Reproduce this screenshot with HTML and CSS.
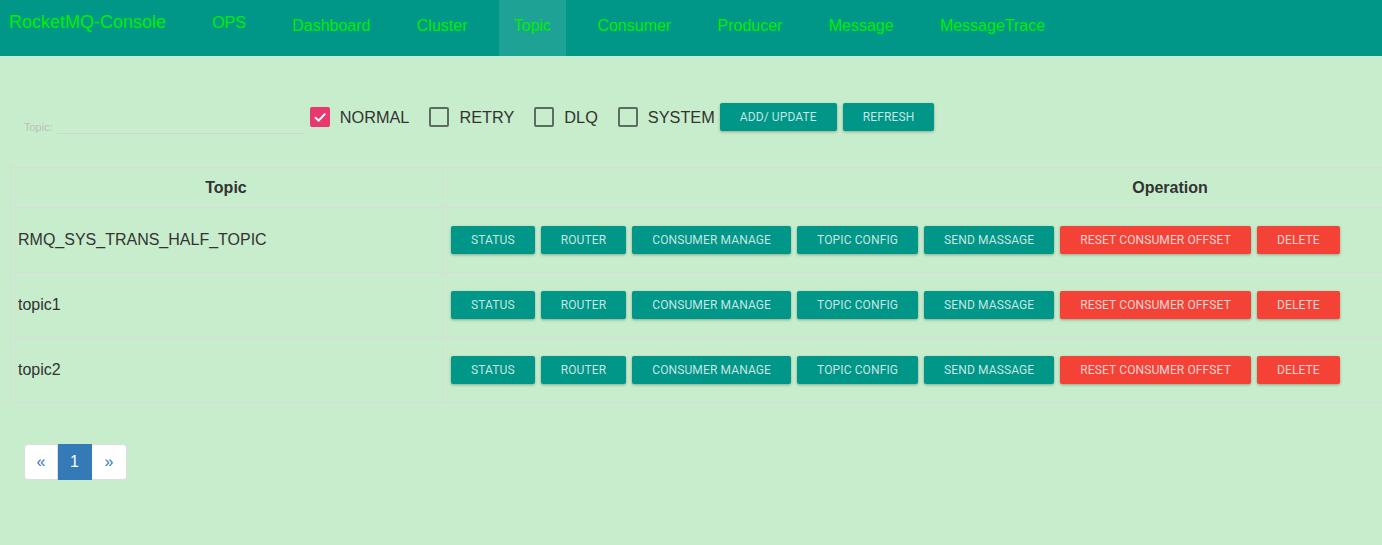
FILE: index.html
```html
<!DOCTYPE html>
<html lang="en">
<head>
<meta charset="utf-8">
<title>RocketMQ-Console</title>
<link rel="stylesheet" href="styles.css">
</head>
<body>
<nav class="navbar">
  <div class="brand">RocketMQ-Console</div>
  <ul class="nav">
    <li class="nav-item ops">OPS</li>
    <li class="nav-item">Dashboard</li>
    <li class="nav-item">Cluster</li>
    <li class="nav-item active">Topic</li>
    <li class="nav-item">Consumer</li>
    <li class="nav-item">Producer</li>
    <li class="nav-item">Message</li>
    <li class="nav-item">MessageTrace</li>
  </ul>
</nav>

<main class="content">
  <div class="filter">
    <div class="topic-field">
      <label class="topic-label">Topic:</label>
      <input class="topic-input" type="text">
    </div>
    <div class="check first">
      <span class="box checked">
        <svg viewBox="0 0 20 20" width="20" height="20"><path d="M5 10.2 L8.6 13.6 L15.2 6.6" fill="none" stroke="#fff" stroke-width="2"/></svg>
      </span>
      <span class="check-label">NORMAL</span>
    </div>
    <div class="check">
      <span class="box"></span>
      <span class="check-label">RETRY</span>
    </div>
    <div class="check">
      <span class="box"></span>
      <span class="check-label">DLQ</span>
    </div>
    <div class="check">
      <span class="box"></span>
      <span class="check-label">SYSTEM</span>
    </div>
    <div class="filter-actions">
      <button class="btn teal">ADD/ UPDATE</button>
      <button class="btn teal">REFRESH</button>
    </div>
  </div>

  <div class="table-wrap">
    <table class="topic-table">
      <thead>
        <tr>
          <th class="col-topic">Topic</th>
          <th>Operation</th>
        </tr>
      </thead>
      <tbody>
        <tr>
          <td class="col-topic">RMQ_SYS_TRANS_HALF_TOPIC</td>
          <td>
            <div class="ops">
              <button class="btn teal">STATUS</button>
              <button class="btn teal">ROUTER</button>
              <button class="btn teal">CONSUMER MANAGE</button>
              <button class="btn teal">TOPIC CONFIG</button>
              <button class="btn teal">SEND MASSAGE</button>
              <button class="btn red">RESET CONSUMER OFFSET</button>
              <button class="btn red">DELETE</button>
            </div>
          </td>
        </tr>
        <tr>
          <td class="col-topic">topic1</td>
          <td>
            <div class="ops">
              <button class="btn teal">STATUS</button>
              <button class="btn teal">ROUTER</button>
              <button class="btn teal">CONSUMER MANAGE</button>
              <button class="btn teal">TOPIC CONFIG</button>
              <button class="btn teal">SEND MASSAGE</button>
              <button class="btn red">RESET CONSUMER OFFSET</button>
              <button class="btn red">DELETE</button>
            </div>
          </td>
        </tr>
        <tr>
          <td class="col-topic">topic2</td>
          <td>
            <div class="ops">
              <button class="btn teal">STATUS</button>
              <button class="btn teal">ROUTER</button>
              <button class="btn teal">CONSUMER MANAGE</button>
              <button class="btn teal">TOPIC CONFIG</button>
              <button class="btn teal">SEND MASSAGE</button>
              <button class="btn red">RESET CONSUMER OFFSET</button>
              <button class="btn red">DELETE</button>
            </div>
          </td>
        </tr>
      </tbody>
    </table>
  </div>

  <ul class="pagination">
    <li class="page">&laquo;</li>
    <li class="page active">1</li>
    <li class="page">&raquo;</li>
  </ul>
</main>
</body>
</html>
```

FILE: styles.css
```css
* { box-sizing: border-box; }

html, body {
  margin: 0;
  padding: 0;
}

body {
  background: #c7edcc;
  font-family: "Liberation Sans", Arial, sans-serif;
  color: #333;
  overflow: hidden;
}

/* ---------- navbar ---------- */
.navbar {
  display: flex;
  height: 56px;
  background: #009688;
}

.brand {
  width: 189px;
  padding: 10px 0 0 9px;
  font-size: 18px;
  line-height: 24px;
  color: #00f000;
}

.nav {
  display: flex;
  margin: 0;
  padding: 0;
  list-style: none;
}

.nav-item {
  margin: 0 8px;
  padding: 16px 15.15px 0;
  font-size: 16px;
  line-height: 20px;
  color: #00f000;
}

.nav-item.ops {
  padding-top: 13px;
}

.nav-item.active {
  background: rgba(255, 255, 255, 0.12);
}

/* ---------- filter ---------- */
.filter {
  display: flex;
  align-items: flex-start;
  padding: 47px 0 0 24px;
  height: 75px;
}

.topic-field {
  display: flex;
  align-items: flex-end;
  margin-top: 16px;
}

.topic-label {
  font-size: 11px;
  line-height: 14px;
  color: #bdbdbd;
}

.topic-input {
  width: 248px;
  height: 15px;
  margin-left: 4px;
  padding: 0;
  border: 0;
  border-bottom: 1px solid #d2d2d2;
  background: transparent;
  outline: none;
}

.check {
  display: flex;
  align-items: center;
  margin-top: 4px;
  margin-left: 20px;
  height: 20px;
}

.check.first {
  margin-left: 5px;
}

.box {
  display: block;
  width: 20px;
  height: 20px;
  border: 2px solid rgba(0, 0, 0, 0.54);
  border-radius: 2px;
}

.box.checked {
  border: 0;
  background: #e8396f;
}

.box svg {
  display: block;
}

.check-label {
  margin-left: 10px;
  font-size: 16.3px;
  line-height: 20px;
  color: #333;
}

.filter-actions {
  display: flex;
  gap: 6px;
  margin-left: 5px;
}

/* ---------- buttons ---------- */
.btn {
  display: inline-block;
  height: 28px;
  padding: 0 20px;
  border: 0;
  border-radius: 2px;
  font-family: Roboto, "Liberation Sans", sans-serif;
  font-size: 12px;
  letter-spacing: 0.12px;
  line-height: 28px;
  color: rgba(255, 255, 255, 0.78);
  box-shadow: 0 1px 3px rgba(0, 0, 0, 0.3);
  white-space: nowrap;
  cursor: pointer;
}

.btn.teal { background: #009688; }
.btn.red { background: #f44336; }

/* ---------- table ---------- */
.table-wrap {
  margin-left: 10px;
  margin-top: 36px;
  overflow: hidden;
}

.topic-table {
  width: 1889px;
  border-collapse: collapse;
  table-layout: fixed;
}

.topic-table th,
.topic-table td {
  border: 1px solid #dadcd8;
  padding: 0 8px 0 7px;
  vertical-align: middle;
}

.topic-table th {
  height: 40px;
  font-size: 16px;
  font-weight: bold;
  text-align: center;
  color: #333;
}

.topic-table td {
  height: 65px;
  font-size: 16px;
  color: #333;
}

.topic-table td + td {
  padding-left: 8px;
}

.topic-table .col-topic {
  width: 432px;
}

.ops {
  display: flex;
  gap: 6px;
}

/* ---------- pagination ---------- */
.pagination {
  display: flex;
  margin: 41px 0 0 24px;
  padding: 0;
  list-style: none;
}

.page {
  width: 34px;
  height: 36px;
  padding: 6px 0;
  border: 1px solid #ddd;
  border-left: 0;
  background: #fff;
  color: #337ab7;
  font-size: 16px;
  line-height: 22px;
  text-align: center;
}

.page:first-child {
  border-left: 1px solid #ddd;
  border-radius: 4px 0 0 4px;
}

.page:last-child {
  width: 35px;
  border-radius: 0 4px 4px 0;
}

.page.active {
  background: #337ab7;
  border-color: #337ab7;
  color: #fff;
}
```
